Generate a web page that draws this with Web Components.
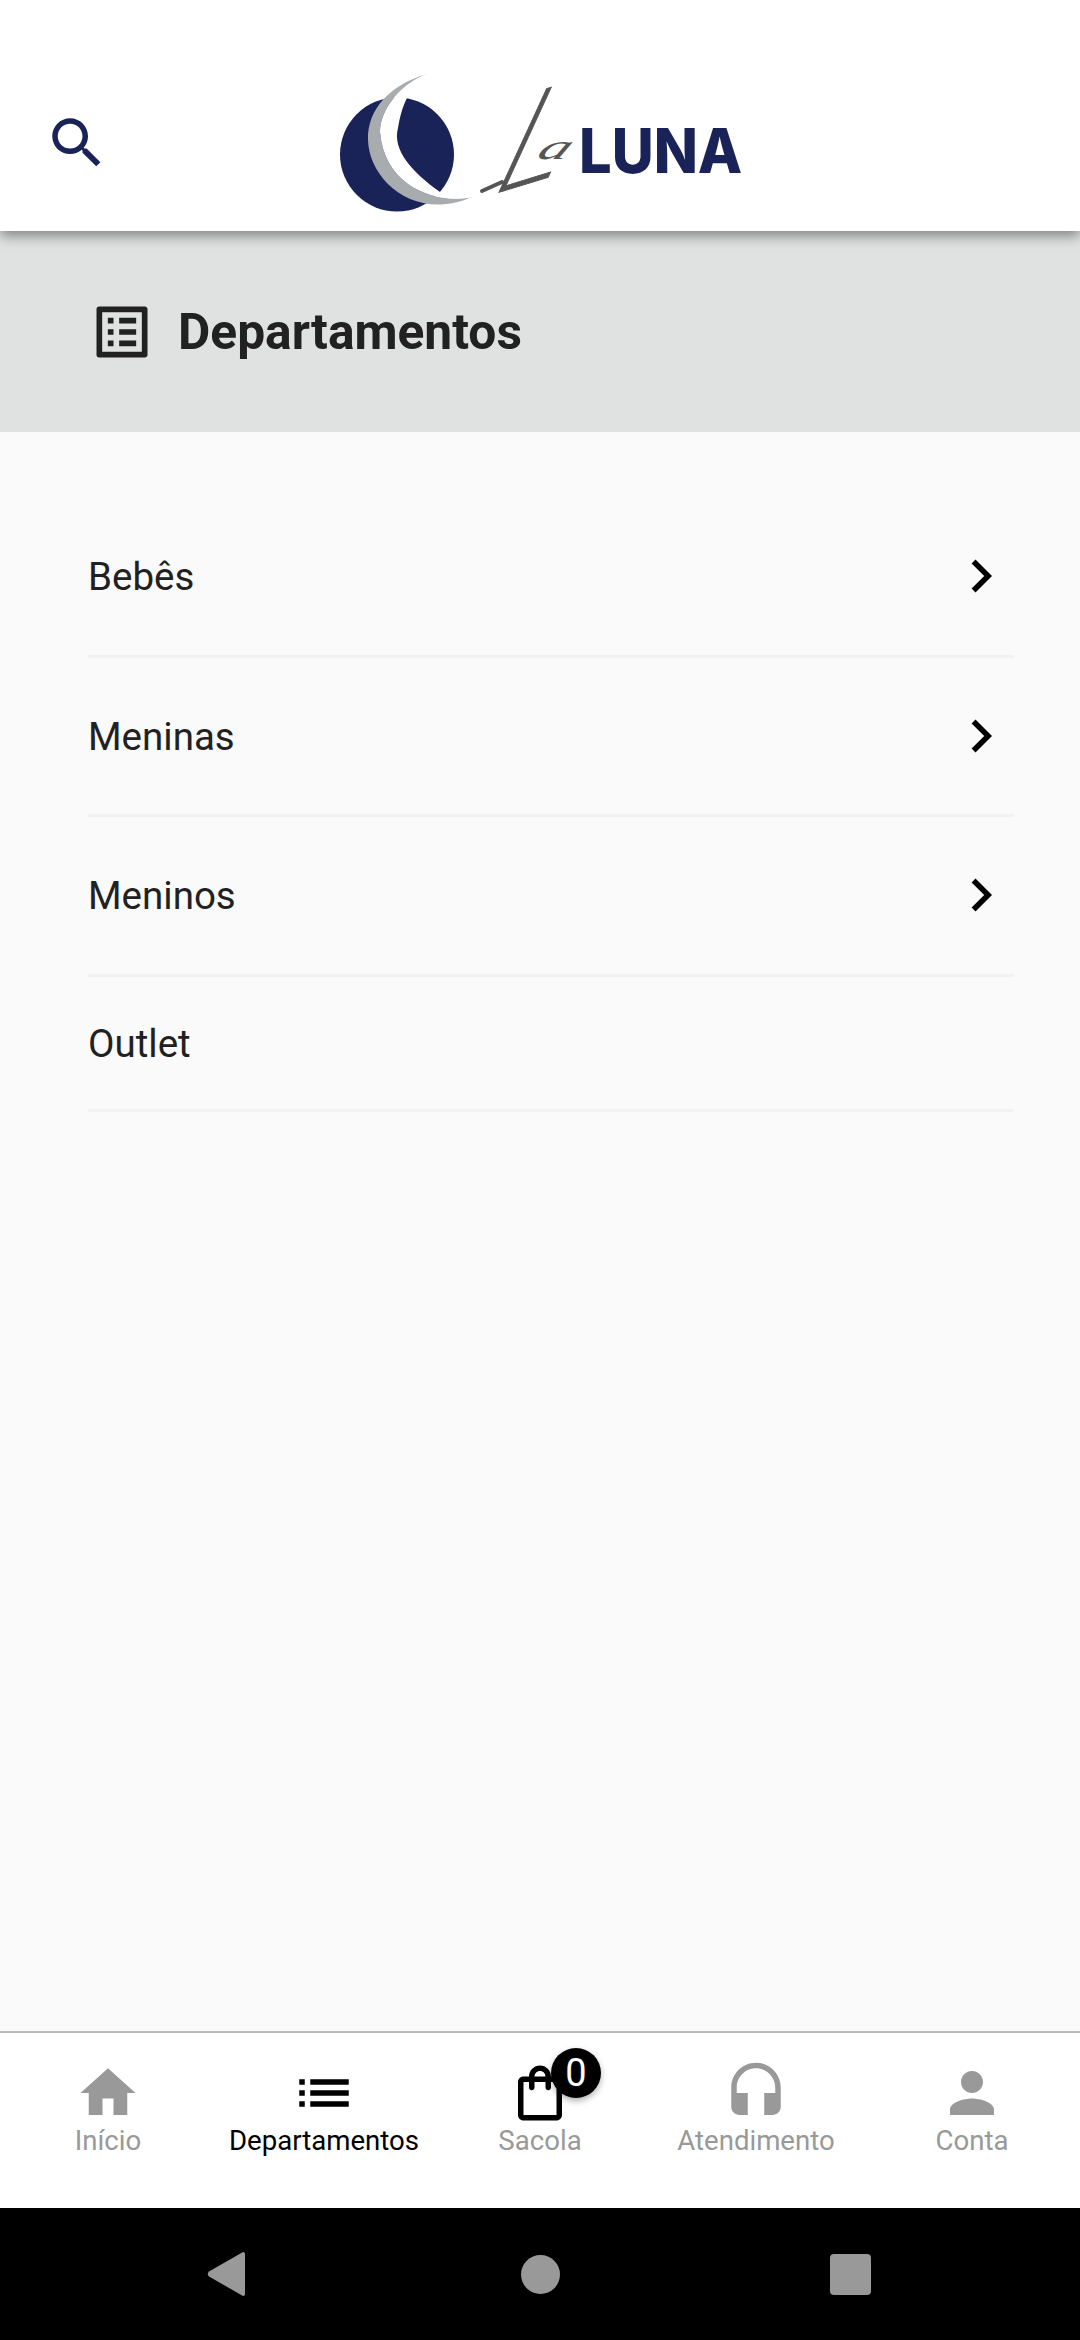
<!DOCTYPE html>
<html lang="pt-BR">
<head>
<meta charset="utf-8">
<title>La Luna</title>
<style>
	html, body { margin: 0; padding: 0; background: #fafafa; }
	body { font-family: Roboto, "Liberation Sans", sans-serif; }
</style>
</head>
<body>
<luna-app>
	<luna-header slot="header"></luna-header>
	<luna-section-title slot="title" icon="list_alt">Departamentos</luna-section-title>
	<luna-menu slot="content">
		<luna-menu-item chevron>Bebês</luna-menu-item>
		<luna-menu-item chevron>Meninas</luna-menu-item>
		<luna-menu-item chevron>Meninos</luna-menu-item>
		<luna-menu-item>Outlet</luna-menu-item>
	</luna-menu>
	<luna-tab-bar slot="tabs">
		<luna-tab icon="home">Início</luna-tab>
		<luna-tab icon="list" active>Departamentos</luna-tab>
		<luna-tab icon="bag" dark-icon badge="0">Sacola</luna-tab>
		<luna-tab icon="headset">Atendimento</luna-tab>
		<luna-tab icon="person">Conta</luna-tab>
	</luna-tab-bar>
	<luna-system-nav slot="system"></luna-system-nav>
</luna-app>

<script>
const ICONS = {
	search: 'M15.5 14h-.79l-.28-.27C15.41 12.59 16 11.11 16 9.5 16 5.91 13.09 3 9.5 3S3 5.91 3 9.5 5.91 16 9.5 16c1.61 0 3.09-.59 4.23-1.57l.27.28v.79l5 4.99L20.49 19l-4.99-5zm-6 0C7.01 14 5 11.99 5 9.5S7.01 5 9.5 5 14 7.01 14 9.5 11.99 14 9.5 14z',
	list_alt: 'M19 5v14H5V5h14m1.1-2H3.9c-.5 0-.9.4-.9.9v16.2c0 .4.4.9.9.9h16.2c.4 0 .9-.5.9-.9V3.9c0-.5-.5-.9-.9-.9zM11 7h6v2h-6V7zm0 4h6v2h-6v-2zm0 4h6v2h-6v-2zM7 7h2v2H7zm0 4h2v2H7zm0 4h2v2H7z',
	chevron: 'M10 6L8.59 7.41 13.17 12l-4.58 4.59L10 18l6-6z',
	home: 'M10 20v-6h4v6h5v-8h3L12 3 2 12h3v8z',
	list: 'M3 13h2v-2H3v2zm0 4h2v-2H3v2zm0-8h2V7H3v2zm4 4h14v-2H7v2zm0 4h14v-2H7v2zM7 7v2h14V7H7z',
	bag: 'M18 6h-2c0-2.21-1.79-4-4-4S8 3.79 8 6H6c-1.1 0-2 .9-2 2v12c0 1.1.9 2 2 2h12c1.1 0 2-.9 2-2V8c0-1.1-.9-2-2-2zm-6-2c1.1 0 2 .9 2 2h-4c0-1.1.9-2 2-2zm6 16H6V8h2v2c0 .55.45 1 1 1s1-.45 1-1V8h4v2c0 .55.45 1 1 1s1-.45 1-1V8h2v12z',
	headset: 'M12 1c-4.97 0-9 4.03-9 9v7c0 1.66 1.34 3 3 3h3v-8H5v-2c0-3.87 3.13-7 7-7s7 3.13 7 7v2h-4v8h3c1.66 0 3-1.34 3-3v-7c0-4.97-4.03-9-9-9z',
	person: 'M12 12c2.21 0 4-1.79 4-4s-1.79-4-4-4-4 1.79-4 4 1.79 4 4 4zm0 2c-2.67 0-8 1.34-8 4v2h16v-2c0-2.66-5.33-4-8-4z'
};

function icon(name, size) {
	return `<svg width="${size}" height="${size}" viewBox="0 0 24 24" fill="currentColor"><path d="${ICONS[name]}"/></svg>`;
}

class LunaApp extends HTMLElement {
	constructor() {
		super();
		this.attachShadow({ mode: 'open' }).innerHTML = `<style>
	:host { display: flex; flex-direction: column; width: 1080px; height: 2340px; overflow: hidden; background: #fafafa; }
	main { flex: 1; }
	</style>
	<slot name="header"></slot>
	<slot name="title"></slot>
	<main><slot name="content"></slot></main>
	<slot name="tabs"></slot>
	<slot name="system"></slot>`;
	}
}

class LunaHeader extends HTMLElement {
	constructor() {
		super();
		this.attachShadow({ mode: 'open' }).innerHTML = `<style>
	:host {
		display: flex;
		position: relative;
		z-index: 2;
		height: 231px;
		box-sizing: border-box;
		padding-left: 44px;
		background: #fff;
		box-shadow: 0 5px 12px rgba(0, 0, 0, .42);
		color: #1a2358;
	}
	.search { display: block; margin-top: 110px; width: 66px; height: 66px; }
	.logo { display: block; margin-left: 220px; }
	svg { display: block; }
	</style>
	<div class="search">${icon('search', 66)}</div>
	<svg class="logo" width="420" height="231" viewBox="330 0 420 231">
		<circle cx="397" cy="154.5" r="57" fill="#1a2358"/>
		<path d="M427 74C392 84 367 108 368 140C369 180 415 222 472 197C440 204 385 190 380 132C380 110 400 84 427 74Z" fill="#a9acaf"/>
		<path d="M427 74C400 84 380 110 380 132C385 190 440 204 472 197L440 192C412 172 392 150 398 128C400 115 403 106 407 98Z" fill="#fff"/>
		<text transform="matrix(.85 -.26 -.46 1 487 196)" font-family="Roboto" font-weight="200" font-size="146" fill="#555" stroke="#555" stroke-width="1">L</text>
		<path d="M482 191Q491 187 502 182" fill="none" stroke="#555" stroke-width="4" stroke-linecap="round"/>
		<text transform="matrix(1.7 0 -.55 1 535 159)" font-family="Liberation Serif" font-style="italic" font-size="36" fill="#555">a</text>
		<text transform="translate(579 173) scale(1.05 1.13)" font-family="Inter" font-weight="800" font-size="55" fill="#1a2358">LUNA</text>
	</svg>`;
	}
}

class LunaSectionTitle extends HTMLElement {
	constructor() {
		super();
		this.attachShadow({ mode: 'open' }).innerHTML = `<style>
	:host {
		display: flex;
		align-items: center;
		height: 201px;
		box-sizing: border-box;
		padding-left: 88px;
		gap: 22px;
		background: #e0e2e2;
		color: #212121;
		font: 700 49.7px Roboto, "Liberation Sans", sans-serif;
	}
	svg { display: block; }
	</style>
	${icon(this.getAttribute('icon'), 68)}
	<slot></slot>`;
	}
}

class LunaMenu extends HTMLElement {
	constructor() {
		super();
		this.attachShadow({ mode: 'open' }).innerHTML = `<style>
	:host { display: block; padding: 66px 66px 0 88px; }
	</style>
	<slot></slot>`;
	}
}

class LunaMenuItem extends HTMLElement {
	constructor() {
		super();
		const chevron = this.hasAttribute('chevron');
		this.attachShadow({ mode: 'open' }).innerHTML = `<style>
	:host {
		display: flex;
		align-items: center;
		justify-content: space-between;
		box-sizing: border-box;
		height: ${chevron ? '159.5px' : '135.5px'};
		border-bottom: 3px solid #f2f2f2;
		color: #212121;
		font: 400 38.5px Roboto, "Liberation Sans", sans-serif;
	}
	.label { padding-top: 1px; }
	svg { display: block; color: #000; }
	</style>
	<div class="label"><slot></slot></div>
	${chevron ? icon('chevron', 66) : ''}`;
	}
}

class LunaTabBar extends HTMLElement {
	constructor() {
		super();
		this.attachShadow({ mode: 'open' }).innerHTML = `<style>
	:host {
		display: grid;
		grid-template-columns: repeat(5, 216px);
		height: 177px;
		box-sizing: border-box;
		border-top: 2px solid #bbb;
		background: #fff;
	}
	</style>
	<slot></slot>`;
	}
}

class LunaTab extends HTMLElement {
	constructor() {
		super();
		const dark = this.hasAttribute('active');
		const iconDark = dark || this.hasAttribute('dark-icon');
		const badge = this.getAttribute('badge');
		this.attachShadow({ mode: 'open' }).innerHTML = `<style>
	:host {
		display: flex;
		flex-direction: column;
		align-items: center;
		padding-top: 27px;
		color: ${dark ? '#000' : '#999'};
		font: 400 27.6px Roboto, "Liberation Sans", sans-serif;
		white-space: nowrap;
	}
	.icon { position: relative; width: 66px; height: 66px; color: ${iconDark ? '#000' : '#999'}; }
	svg { display: block; }
	.label { margin-top: -2px; line-height: 34px; }
	.badge {
		position: absolute;
		left: 44px;
		top: -12px;
		width: 50px;
		height: 50px;
		border-radius: 50%;
		display: flex;
		align-items: center;
		justify-content: center;
		background: #000;
		color: #fff;
		font-size: 38px;
		box-shadow: 0 3px 6px rgba(0, 0, 0, .3);
	}
	</style>
	<div class="icon">${icon(this.getAttribute('icon'), 66)}${badge !== null ? `<span class="badge">${badge}</span>` : ''}</div>
	<div class="label"><slot></slot></div>`;
	}
}

class LunaSystemNav extends HTMLElement {
	constructor() {
		super();
		this.attachShadow({ mode: 'open' }).innerHTML = `<style>
	:host {
		display: flex;
		align-items: center;
		height: 132px;
		padding-left: 207px;
		background: #000;
		color: #999;
	}
	svg { display: block; }
	.home { width: 39px; height: 39px; border-radius: 50%; background: #999; margin-left: 276px; }
	.square { width: 41px; height: 41px; border-radius: 4px; background: #999; margin-left: 270px; }
	</style>
	<svg width="38" height="46" viewBox="0 0 38 46"><path d="M36 1L2 20.5Q-.5 23 2 25.5L36 45Q38 45 38 43V3Q38 1 36 1Z" fill="currentColor"/></svg>
	<div class="home"></div>
	<div class="square"></div>`;
	}
}

customElements.define('luna-app', LunaApp);
customElements.define('luna-header', LunaHeader);
customElements.define('luna-section-title', LunaSectionTitle);
customElements.define('luna-menu', LunaMenu);
customElements.define('luna-menu-item', LunaMenuItem);
customElements.define('luna-tab-bar', LunaTabBar);
customElements.define('luna-tab', LunaTab);
customElements.define('luna-system-nav', LunaSystemNav);
</script>
</body>
</html>
